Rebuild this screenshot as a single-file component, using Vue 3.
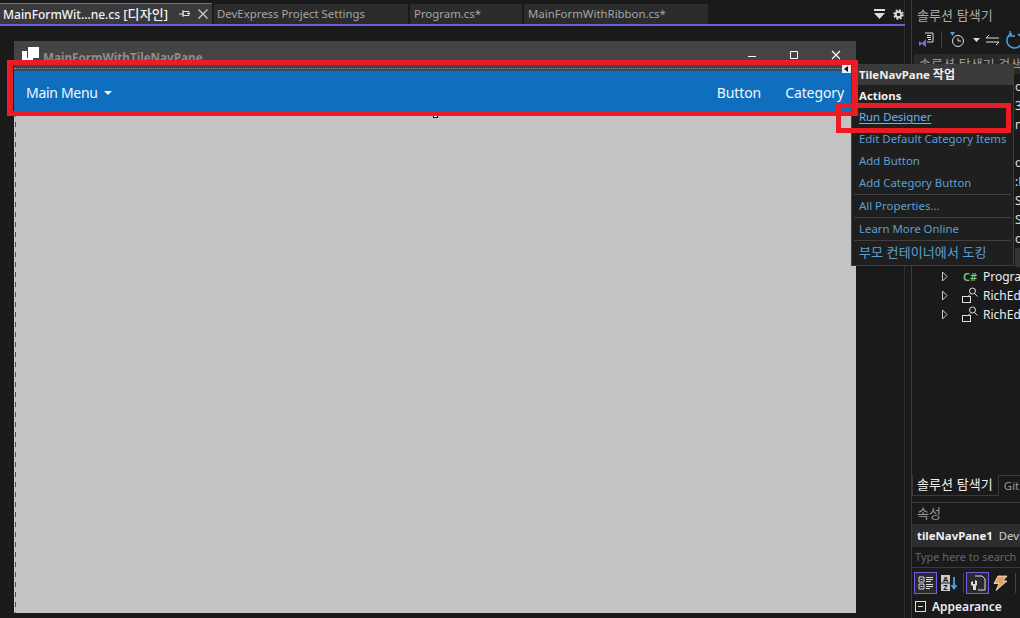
<script setup>
const tabs = [
  { label: 'DevExpress Project Settings', width: 194 },
  { label: 'Program.cs*', width: 112 },
  { label: 'MainFormWithRibbon.cs*', width: 184 },
]
const menuItems = [
  { label: 'Run Designer', cls: 'first' },
  { label: 'Edit Default Category Items' },
  { label: 'Add Button' },
  { label: 'Add Category Button', sep: true },
  { label: 'All Properties...', sep: true },
  { label: 'Learn More Online', sep: true },
  { label: '부모 컨테이너에서 도킹', cls: 'ko' },
]
const fragments = ['o', '3', 'n', '', 'o', ':M', 'Se', 'Se', 'o', '']
</script>

<template>
  <div class="root">
    <div class="left">
      <div class="tabbar">
        <div class="tab active">
          <span class="tab-title">MainFormWit...ne.cs <span class="ko">[디자인]</span></span>
          <svg class="pin" width="12" height="12" viewBox="0 0 12 12"><path d="M0 6h4M4 3.500h6v4H4zM4 2v7M8 5.500h3" fill="none" stroke="#ddd" /></svg>
          <svg class="close" width="12" height="12" viewBox="0 0 12 12"><path d="M1.500 1.500l9 9M10.500 1.500l-9 9" stroke="#ccc" stroke-width="1.300" /></svg>
        </div>
        <div v-for="t in tabs" :key="t.label" class="tab" :style="{ width: t.width + 'px' }">{{ t.label }}</div>
        <div class="tab-tools">
          <svg width="11" height="10" viewBox="0 0 11 10"><path d="M0 0h11v2H0zM0 4h11L5.500 10z" fill="#ddd" /></svg>
          <svg width="11" height="11" viewBox="0 0 11 11"><circle cx="5.500" cy="5.500" r="2.800" fill="none" stroke="#ddd" stroke-width="2" /><circle cx="5.500" cy="5.500" r="4.500" fill="none" stroke="#ddd" stroke-width="1.500" stroke-dasharray="2 1.530" /></svg>
        </div>
      </div>
      <div class="designer">
        <div class="form">
          <div class="titlebar">
            <svg class="formicon" width="17" height="16" viewBox="0 0 17 16"><path d="M6 0h11v11H6z" fill="#fff" /><path d="M0 4h5v7h6v4H0z" fill="#fff" /></svg>
            <span class="formtitle">MainFormWithTileNavPane</span>
            <div class="winbtns">
              <svg width="12" height="12" viewBox="0 0 12 12"><path d="M2 7.500h8" stroke="#fff" /></svg>
              <svg width="12" height="12" viewBox="0 0 12 12"><path d="M2.500 2.500h7v7h-7z" fill="none" stroke="#fff" /></svg>
              <svg width="12" height="12" viewBox="0 0 12 12"><path d="M2 2l8 8M10 2l-8 8" stroke="#fff" stroke-width="1.200" /></svg>
            </div>
          </div>
          <div class="strip"></div>
          <div class="nav">
            <span class="nav-main">Main Menu<i class="caret"></i></span>
            <span class="nav-spacer"></span>
            <span class="nav-item">Button</span>
            <span class="nav-item">Category</span>
          </div>
          <div class="canvas"></div>
        </div>
      </div>
    </div>

    <div class="right">
      <div class="explorer">
        <div class="panel-title ko">솔루션 탐색기</div>
        <div class="toolbar">
          <svg class="tb-vs" width="18" height="18" viewBox="0 0 18 18"><path d="M1 10l3 2 4-4v8l-4-3-3 2z" fill="#8a63d2" /><path d="M7 2h8v9H9" fill="none" stroke="#ddd" /><path d="M9 4.500h4M9 6.500h4M10 8.500h3" stroke="#ddd" /></svg>
          <span class="tb-sep"></span>
          <svg class="tb-clock" width="18" height="18" viewBox="0 0 18 18"><path d="M1 1h5L3.500 5z" fill="#4aa3e8" /><circle cx="9" cy="10" r="5.500" fill="none" stroke="#ddd" /><path d="M9 7v3h3" fill="none" stroke="#ddd" /></svg>
          <svg class="tb-caret" width="7" height="4" viewBox="0 0 7 4"><path d="M0 0h7L3.500 4z" fill="#ddd" /></svg>
          <svg class="tb-sync" width="15" height="12" viewBox="0 0 15 12"><path d="M4 1L1 4h13M11 11l3-3H1" fill="none" stroke="#ddd" /></svg>
          <svg class="tb-refresh" width="16" height="18" viewBox="0 0 16 18"><path d="M6 2.500a7.500 7.500 0 1 0 6 .5" fill="none" stroke="#4aa3e8" stroke-width="1.500" /><path d="M4 0v5h5" fill="none" stroke="#4aa3e8" stroke-width="1.300" /></svg>
        </div>
        <div class="searchbox ko">솔루션 탐색기 검색</div>
        <div class="tree">
          <div class="tree-frags">
            <span v-for="(f, i) in fragments" :key="i" class="frag" :class="{ lit: i === 9 }">{{ f }}</span>
          </div>
          <div class="tree-row">
            <svg class="tri" width="6" height="11" viewBox="0 0 6 11"><path d="M.5 1l4.500 4.500L.5 10z" fill="none" stroke="#ccc" /></svg>
            <span class="cs">C#</span><span>Program.cs</span>
          </div>
          <div v-for="n in 2" :key="n" class="tree-row">
            <svg class="tri" width="6" height="11" viewBox="0 0 6 11"><path d="M.5 1l4.500 4.500L.5 10z" fill="none" stroke="#ccc" /></svg>
            <svg class="ri" width="16" height="17" viewBox="0 0 16 17"><rect x="0.500" y="9.500" width="8" height="6" fill="none" stroke="#ddd" /><circle cx="10.500" cy="4" r="3" fill="none" stroke="#ddd" /><path d="M8 7.500L6.500 9M12.500 6.500l3 3" stroke="#ddd" /></svg>
            <span>RichEditor</span>
          </div>
        </div>
        <div class="bottomtabs">
          <span class="btab on ko">솔루션 탐색기</span>
          <span class="btab">Git 변경</span>
        </div>
      </div>
      <div class="props">
        <div class="panel-title props-title ko">속성</div>
        <div class="objname"><b>tileNavPane1</b> DevExpress</div>
        <div class="propsearch">Type here to search</div>
        <div class="proptools">
          <span class="ptbtn on">
            <svg width="16" height="16" viewBox="0 0 16 16"><path d="M1 2h5v5H1zM1 9h5v5H1z" fill="none" stroke="#ddd" /><path d="M2.500 4.500h2M2.500 11.500h2M8 2.500h7M8 4.500h7M8 6.500h5M8 9.500h7M8 11.500h7M8 13.500h4" stroke="#ddd" /></svg>
          </span>
          <span class="ptbtn">
            <svg width="16" height="16" viewBox="0 0 16 16"><rect x="0" y="0" width="9" height="7.500" fill="#ccc" /><rect x="0" y="8.500" width="9" height="7.500" fill="#ccc" /><text x="4.500" y="6.800" font-size="7.500" font-weight="700" text-anchor="middle" fill="#1a1a1a">A</text><text x="4.500" y="15.300" font-size="7.500" font-weight="700" text-anchor="middle" fill="#1a1a1a">Z</text><path d="M13 2v11M10.500 10l2.500 3.500 2.500-3.500" fill="none" stroke="#4aa3e8" stroke-width="1.800" /></svg>
          </span>
          <span class="tb-sep small"></span>
          <span class="ptbtn on">
            <svg width="16" height="16" viewBox="0 0 16 16"><path d="M5 1h7l3 3v11H8" fill="none" stroke="#ddd" /><path d="M1 7l2-1v3h2V5l2 1v4l-1 1v4H3v-4L1 10z" fill="#ddd" /></svg>
          </span>
          <span class="ptbtn">
            <svg width="15" height="16" viewBox="0 0 15 16"><path d="M5 1h9l-4 5h4L3 15.500l3-7H1z" fill="#e8a15c" stroke="#fff" stroke-width="0.700" /></svg>
          </span>
          <span class="tb-sep small end"></span>
        </div>
        <div class="category"><i class="minus"></i><b>Appearance</b></div>
      </div>
    </div>

    <!-- Smart-tag popup lying over the form and the solution explorer -->
    <div class="smarttag">
      <div class="st-head">TileNavPane <span class="ko">작업</span></div>
      <div class="st-actions">Actions</div>
      <template v-for="m in menuItems" :key="m.label">
        <div class="st-item" :class="m.cls">{{ m.label }}</div>
        <div v-if="m.sep" class="st-sep"></div>
      </template>
    </div>
    <div class="tagglyph"><i></i></div>
    <div class="grip"></div>

    <!-- Red annotation boxes -->
    <div class="mark mark-nav"></div>
    <div class="mark mark-run"></div>
  </div>
</template>

<style>
html, body { margin: 0; background: #1a1a1a; overflow: hidden; }
</style>

<style scoped>
.root {
  position: relative;
  width: 1020px;
  height: 618px;
  display: flex;
  overflow: hidden;
  background: #1a1a1a;
  font-family: "Noto Sans", "Noto Sans CJK KR", sans-serif;
  font-size: 11.4px;
  color: #ccc;
}
.ko { font-size: 13px; letter-spacing: 0.1px; }
.left { width: 905px; display: flex; flex-direction: column; flex: none; box-sizing: border-box; border-right: 1px solid #2c2c2c; }
.tabbar {
  height: 26px;
  display: flex;
  gap: 2px;
  box-sizing: border-box;
  padding-top: 4px;
  border-bottom: 2px solid #6e5fd6;
  margin-right: -1px;
}
.tab {
  height: 20px;
  line-height: 20px;
  padding-left: 4px;
  box-sizing: border-box;
  background: #2c2c2c;
  color: #a5a5a5;
  white-space: nowrap;
  overflow: hidden;
}
.tab:nth-child(2) { padding-left: 3px; }
.tab.active {
  width: 212px;
  margin-top: -1px;
  height: 21px;
  padding-left: 3px;
  background: #3a3a3c;
  color: #f2f2f2;
  font-weight: 500;
  font-size: 12px;
  border-top: 1px solid #6e5fd6;
  display: flex;
  align-items: center;
}
.tab-title { width: 176px; flex: none; overflow: hidden; white-space: nowrap; }
.tab-title .ko { font-size: 13px; }
.pin { margin-right: 6px; flex: none; }
.close { flex: none; }
.tab-tools {
  margin-left: auto;
  display: flex;
  align-items: center;
  gap: 8px;
  height: 20px;
  padding-right: 1px;
}
.designer { flex: 1; padding: 15px 48px 5px 14px; min-height: 0; display: flex; }
.form { flex: 1; display: flex; flex-direction: column; background: #c3c3c3; }
.titlebar {
  height: 27px;
  flex: none;
  background: #444;
  display: flex;
  align-items: center;
  padding: 0 14px 0 8px;
}
.formicon { margin-top: 1px; }
.formtitle { margin-left: 4px; font-weight: 700; color: #8e8e8e; font-size: 11.7px; padding-top: 4px; }
.winbtns { margin-left: auto; display: flex; gap: 30px; }
.strip { height: 3px; flex: none; background: #3d4a57; border-top: 1px dotted #8a8a8a; box-sizing: border-box; }
.nav {
  height: 41px;
  flex: none;
  display: flex;
  align-items: center;
  box-sizing: border-box;
  padding: 1px 12px 0;
  background: #0f6fbe;
  color: #f2f6fb;
  font-size: 14px;
}
.nav-main { display: flex; align-items: center; gap: 6px; letter-spacing: -0.3px; }
.caret { width: 0; height: 0; border: 4px solid transparent; border-top: 4px solid #f2f6fb; border-bottom: 0; margin-top: 2px; }
.nav-spacer { flex: 1; }
.nav-item { margin-left: 24px; letter-spacing: -0.1px; }
.canvas {
  flex: 1;
  background: linear-gradient(#d3232a 50%, transparent 50%) 1px 0 / 1px 10px repeat-y;
}

.right { flex: 1; min-width: 0; padding-left: 6px; display: flex; flex-direction: column; white-space: nowrap; overflow: hidden; }
.explorer { height: 502px; flex: none; border-left: 1px solid #3c3c3c; display: flex; flex-direction: column; box-sizing: border-box; padding-top: 5px; }
.panel-title { padding-left: 5px; color: #aaa; height: 20px; line-height: 20px; }
.toolbar { display: flex; align-items: center; height: 28px; padding-left: 6px; margin-top: 1px; flex: none; }
.toolbar svg { flex: none; }
.tb-clock { margin-left: 7px; }
.tb-caret { margin-left: 6px; }
.tb-sync { margin-left: 5px; }
.tb-refresh { margin-left: 6px; }
.tb-sep { width: 1px; height: 18px; flex: none; background: #444; margin-left: 5px; }
.tb-sep.small { height: 20px; margin: 0 2px 0 3px; }
.tb-sep.end { margin-left: 3px; }
.searchbox { height: 20px; margin-left: 2px; background: #2a2a2a; color: #999; line-height: 21px; padding-left: 5px; flex: none; }
.tree { flex: 1; min-height: 0; padding-top: 1px; }
.tree-frags { display: flex; flex-direction: column; align-items: flex-end; box-sizing: border-box; padding-top: 2px; }
.frag { height: 19px; line-height: 19px; width: 5px; overflow: hidden; color: #ddd; font-size: 12px; }
.frag.lit { background: #343434; }
.tree-row { height: 19px; display: flex; align-items: center; padding-left: 30px; color: #eee; font-size: 12px; }
.tri { flex: none; }
.tree-row .cs { color: #7fc97f; font-size: 11px; width: 20px; flex: none; margin-left: 15px; font-weight: 600; }
.ri { flex: none; margin: 0 5px 0 14px; }
.bottomtabs { height: 21px; flex: none; display: flex; margin-bottom: 6px; margin-top: auto; }
.btab { padding: 0 5px; line-height: 19px; color: #9a9a9a; border-top: 1px solid #3a3a3a; }
.btab.on { color: #eee; border: 1px solid #3a3a3a; border-top: 0; padding: 0 5px 0 4px; }
.props { flex: 1; border-left: 1px solid #3c3c3c; border-top: 1px solid #3a3a3a; display: flex; flex-direction: column; min-height: 0; }
.props-title { height: 21px; line-height: 21px; color: #999; flex: none; }
.objname { height: 23px; line-height: 23px; flex: none; background: #2d2d2d; padding-left: 5px; color: #ccc; }
.objname b { color: #f2f2f2; margin-right: 3px; }
.propsearch { height: 21px; line-height: 20px; flex: none; box-sizing: border-box; padding-left: 3px; font-size: 11px; color: #666; border-bottom: 1px solid #3a3a3a; }
.proptools { height: 29px; flex: none; display: flex; align-items: center; padding-left: 2px; }
.ptbtn { width: 23px; height: 22px; flex: none; display: flex; align-items: center; justify-content: center; box-sizing: border-box; }
.ptbtn.on { border: 1px solid #7160e8; background: #2b2b2b; }
.category { display: flex; align-items: center; gap: 6px; padding-left: 3px; color: #eee; height: 16px; font-size: 12px; margin-top: 1px; flex: none; }
.category b { font-weight: 600; }
.minus { position: relative; width: 9px; height: 9px; flex: none; border: 1px solid #ddd; }
.minus::after { content: ""; position: absolute; left: 2px; right: 2px; top: 4px; height: 1px; background: #ddd; }

.smarttag {
  position: absolute;
  left: 851px;
  top: 64px;
  width: 163px;
  height: 202px;
  box-sizing: border-box;
  background: #1f1f1f;
  border: 1px solid #3c3c3c;
  border-left-color: #444;
}
.st-head { height: 20px; background: #3a3a3a; color: #efefef; font-weight: 700; line-height: 19px; padding-left: 7px; }
.st-head .ko { font-size: 12px; }
.st-actions { height: 21px; line-height: 21px; color: #f2f2f2; font-weight: 700; padding-left: 7px; }
.st-item { height: 22px; line-height: 22px; color: #5c9fd2; padding-left: 7px; white-space: nowrap; }
.st-item.first { text-decoration: underline; text-underline-offset: 2px; color: #6cb5e6; }
.st-sep { height: 1px; margin: 0 2px; background: #404040; }
.tagglyph {
  position: absolute;
  left: 842px;
  top: 65px;
  width: 9px;
  height: 8px;
  background: #e8eef5;
}
.tagglyph i { display: block; width: 0; height: 0; margin: 1px 0 0 2px; border-right: 4px solid #111; border-top: 3px solid transparent; border-bottom: 3px solid transparent; }
.grip {
  position: absolute;
  left: 433px;
  top: 114px;
  width: 5px;
  height: 4px;
  background: #fff;
  border: 1px solid #111;
  box-sizing: border-box;
}
.mark { position: absolute; border-style: solid; border-color: #ed1c24; border-width: 5px; box-sizing: border-box; pointer-events: none; }
.mark-nav { left: 7px; top: 60px; width: 851px; height: 56px; border-width: 5px 6px; }
.mark-run { left: 836px; top: 103px; width: 175px; height: 30px; }
</style>
